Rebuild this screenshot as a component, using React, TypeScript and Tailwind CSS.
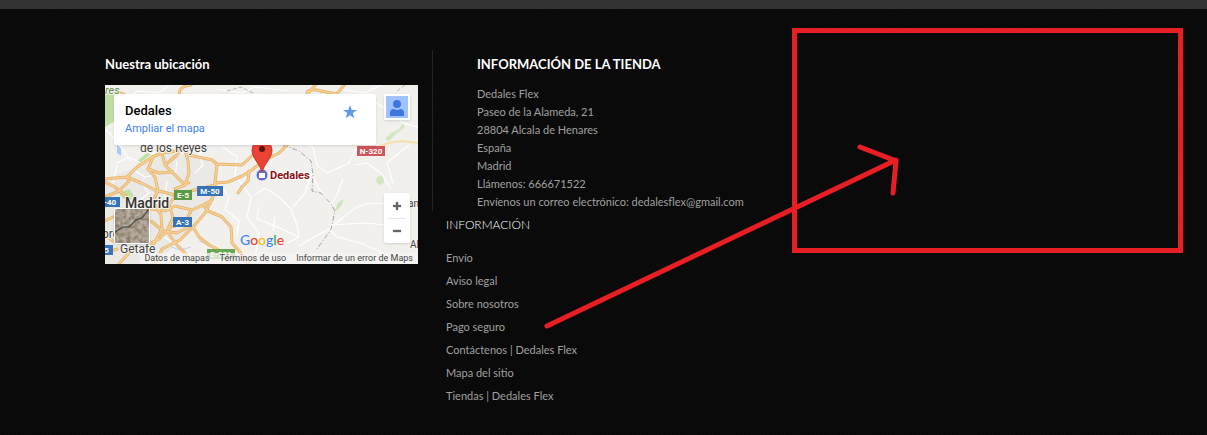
import { Minus, Plus } from "lucide-react";

const STORE_LINES = [
  "Dedales Flex",
  "Paseo de la Alameda, 21",
  "28804 Alcala de Henares",
  "España",
  "Madrid",
  "Llámenos: 666671522",
  "Envíenos un correo electrónico: dedalesflex@gmail.com",
];

const INFO_LINKS = [
  "Envío",
  "Aviso legal",
  "Sobre nosotros",
  "Pago seguro",
  "Contáctenos | Dedales Flex",
  "Mapa del sitio",
  "Tiendas | Dedales Flex",
];

const MOTORWAYS = [
  "M4 6 Q10 4 15 8 Q24 10 25 18",
  "M76 14 Q70 2 86 0",
  "M200 12 L212 -2 M202 7 Q206 3 216 6 L232 9 M231 10 L241 -2",
  "M0 94 L10 93 L22 92 L32 82 L47 72 L57 68 L80 65 L84 70 L107 75 L112 79 L137 80 L148 70 L160 60",
  "M112 79 L110 98 L108 112 L100 128 L88 142 L75 155 L57 164 L50 179",
  "M80 65 L83 76 L84 88 L80 100 L70 104",
  "M57 68 L60 80 L67 87 L77 97 L84 98 M60 80 L72 70 L78 60",
  "M48 72 L43 84 L50 92 L53 106 L48 116 L56 130 L57 144 L47 162",
  "M43 84 L54 88 L67 87",
  "M0 112 L14 106 L24 96 L22 92 M0 97 L10 102 L24 114",
  "M22 92 L36 98 L50 105 L70 110 L86 106 L110 100",
  "M107 115 L98 120 L87 125 L70 121 L60 126 L46 124",
  "M98 120 L103 126 L117 132 L126 142 L127 158 L134 166 L144 179",
  "M70 111 L64 120 L68 132 L62 146 L70 158 L82 170",
  "M86 126 L80 138 L66 142 L54 154 L46 158",
  "M46 136 L58 146 L72 148 L84 142",
  "M88 142 L94 152 L104 160 L120 168",
  "M0 150 L8 156 M14 179 L24 168 M0 136 L8 132 M0 168 L12 164",
  "M110 98 L123 97 L137 91 L147 85 L158 76 L174 68 L188 54",
  "M144 86 L143 96 L137 102 L133 108",
];

const STREETS = [
  "M12 78 L24 72 L36 78 L54 64 M90 88 L98 80 L94 70 L102 60",
  "M118 62 L132 72 L130 90 L146 112 L142 132 L154 148 L150 172",
  "M115 100 L124 112 L120 124 L134 136 L132 150",
  "M150 110 L160 103 L174 112 L186 124 L192 140 L194 152 L182 158",
  "M154 122 L152 134 L168 140 L194 152 M170 132 L168 146",
  "M224 144 L236 134 L252 122 L262 119 L282 118",
  "M224 144 L232 152 L256 158 L282 170 M224 140 L262 138 L280 140",
  "M224 144 L206 154 L194 161 M208 92 L214 104 L226 120 L232 110 L238 94",
  "M194 55 L208 62 L212 80 L222 88 L244 78 L252 62",
  "M208 84 L200 108 L188 122 M250 80 L262 78 L276 88 L286 104",
  "M271 18 L284 26 L298 38 L313 42 M304 60 L294 68 L282 78 L288 98",
  "M234 4 L260 8 L276 0 M112 4 L136 8 L150 2 L184 6 M22 14 L32 6 L54 8 L64 0",
  "M0 44 L10 54 L26 76 M12 80 L8 98 M30 86 L40 92 L50 90",
  "M62 96 L60 112 M72 76 L70 92 M38 100 L44 108 L34 116",
  "M56 150 L66 156 L76 164 M44 132 L50 140",
];

type ShieldProps = { x: number; y: number; w: number; label: string; fill: string };

function RoadShield({ x, y, w, label, fill }: ShieldProps) {
  return (
    <g>
      <rect x={x} y={y} width={w} height="10" fill={fill} />
      <text x={x + w / 2} y={y + 8} textAnchor="middle" fontSize="8" fontWeight="700" fill="#fff">
        {label}
      </text>
    </g>
  );
}

function MapCanvas() {
  return (
    <svg
      viewBox="0 0 313 179"
      preserveAspectRatio="xMidYMid slice"
      className="block h-full w-full"
      fontFamily="Roboto, sans-serif"
      role="img"
      aria-label="Mapa de Madrid"
    >
      <rect width="313" height="179" fill="#f1f0ec" />
      <path d="M0 94 L32 82 L57 68 L84 70 L112 79 L108 112 L75 155 L50 179 L0 179 Z" fill="#ebe9e5" />
      <g fill="#bfdfa5">
        <path d="M0 6 L16 12 L10 36 L0 42 Z" />
        <path d="M32 76 L42 68 L47 70 L36 81 Z" />
        <path d="M14 108 L24 104 L30 112 L18 114 Z" />
        <path d="M280 54 l6 -6 l8 -4 l4 -6 l2 4 l-10 8 l-6 6z" opacity="0.6" />
        <path d="M272 92 l6 -2 l1 8 l-4 2 l-4 -3z" opacity="0.6" />
        <path d="M229 128 l4 -10 l6 -4 l-3 7z" opacity="0.7" />
      </g>
      <path d="M12 60 v8 l4 3 v-8z" fill="#a6caff" />
      <path d="M66 162 L76 165 L86 162 M94 156 L106 160" stroke="#b9d4fa" strokeWidth="1" fill="none" />
      <g fill="none" stroke="#fff" strokeWidth="1.2" strokeLinejoin="round">
        {STREETS.map((d) => (
          <path key={d} d={d} />
        ))}
      </g>
      <path d="M266 64 L284 58 L296 56 L313 58" stroke="#f6dfaa" strokeWidth="2" fill="none" />
      <path
        d="M178 60 L194 66 L206 76 L208 90 L207 106 L216 108 L226 119 L230 126 L226 144 L222 150 L212 164"
        fill="none"
        stroke="#a5a29e"
        strokeWidth="1"
        strokeDasharray="5 2 1 2"
      />
      <path
        d="M122 6 L136 2 L148 8 M292 6 L300 0"
        fill="none"
        stroke="#b7b4b0"
        strokeWidth="1"
        strokeDasharray="4 2"
      />
      <g fill="none" strokeLinejoin="round" strokeLinecap="round">
        <g stroke="#e2b068" strokeWidth="3">
          {MOTORWAYS.map((d) => (
            <path key={d} d={d} />
          ))}
        </g>
        <g stroke="#f8cf92" strokeWidth="1.6">
          {MOTORWAYS.map((d) => (
            <path key={d} d={d} />
          ))}
        </g>
      </g>

      <g fill="#444" stroke="#f6f4f0" strokeWidth="2" paintOrder="stroke">
        <text x="0" y="9" fontSize="11" fontStyle="italic" fill="#5c8a4c">res</text>
        <text x="35" y="67" fontSize="12">de los Reyes</text>
        <text x="20" y="123" fontSize="14" fontWeight="500" fill="#333">Madrid</text>
        <text x="-3" y="153" fontSize="12">orc</text>
        <text x="15" y="168" fontSize="12">Getafe</text>
        <text x="303" y="122" fontSize="10">an</text>
        <text x="305" y="163" fontSize="10">Al</text>
      </g>

      <RoadShield x={252} y={61} w={28} label="N-320" fill="#d0545c" />
      <RoadShield x={69} y={105} w={18} label="E-5" fill="#5a9a45" />
      <RoadShield x={92} y={101} w={26} label="M-50" fill="#3673b9" />
      <RoadShield x={68} y={132} w={19} label="A-3" fill="#3673b9" />
      <RoadShield x={-5} y={112} w={20} label="-40" fill="#3673b9" />
      <RoadShield x={-5} y={160} w={13} label="5" fill="#3673b9" />
      <RoadShield x={102} y={164} w={28} label="E-901" fill="#6da556" />

      <circle cx="157" cy="90" r="6" fill="#5d70cf" stroke="#e8eafc" strokeWidth="1" />
      <path d="M154 93 v-5 h2 v-2 h2 v2 h2 v5z" fill="#fff" />
      <path
        d="M157 88 C155 78 147 74 147 65 A10 10 0 0 1 167 65 C167 74 159 78 157 88 Z"
        fill="#ea4335"
        stroke="#b3261d"
        strokeWidth="0.8"
      />
      <circle cx="157" cy="64" r="3" fill="#5b1410" />
      <text
        x="165"
        y="94"
        fontSize="11"
        fontWeight="700"
        fill="#8b1014"
        stroke="#fff"
        strokeWidth="2"
        paintOrder="stroke"
      >
        Dedales
      </text>
    </svg>
  );
}

function SatelliteThumb() {
  return (
    <svg viewBox="0 0 34 34" className="block h-full w-full" aria-hidden="true">
      <filter id="terrain">
        <feTurbulence type="fractalNoise" baseFrequency="0.25" numOctaves="3" seed="4" />
        <feColorMatrix values="0.5 0 0 0 0.13  0.45 0 0 0 0.1  0.4 0 0 0 0.06  0 0 0 0 1" />
      </filter>
      <rect width="34" height="34" filter="url(#terrain)" />
      <path d="M0 23 L8 18 L14 18 L21 11 L27 9 L34 0" fill="none" stroke="#343b31" strokeWidth="1.5" opacity="0.7" />
    </svg>
  );
}

function LocationMap() {
  return (
    <div className="relative mt-[11px] h-[179px] overflow-hidden bg-[#f1f0ec] font-[Roboto,sans-serif]">
      <MapCanvas />

      <div className="absolute top-[9px] left-[9px] flex h-[51px] w-[262px] justify-between rounded-xs bg-white px-[11px] pt-2 shadow">
        <div>
          <p className="text-[13px] leading-[18px] font-medium text-black">Dedales</p>
          <a href="#mapa" className="block text-[11px] leading-[18px] text-[#427fed]">
            Ampliar el mapa
          </a>
        </div>
        <button type="button" aria-label="Guardar" className="mr-2 flex h-5 items-center text-[#5f9ae8]">
          <svg viewBox="0 0 20 20" width="14" height="14" aria-hidden="true">
            <path d="M10 0 L12.4 7 H20 L14 11.6 L16.2 19 L10 14.6 L3.8 19 L6 11.6 L0 7 H7.6 Z" fill="currentColor" />
          </svg>
        </button>
      </div>

      <button
        type="button"
        aria-label="Cuenta"
        className="absolute top-[9px] right-2 size-[26px] border-2 border-white bg-[#a0c3ff] text-[#3f76e0] shadow"
      >
        <svg viewBox="0 0 22 22" className="block size-full" fill="currentColor" aria-hidden="true">
          <circle cx="11" cy="8" r="4" />
          <path d="M4 20 V17 Q4 13 8 13 Q11 15 14 13 Q18 13 18 17 V20 Z" />
        </svg>
      </button>

      <div className="absolute top-[108px] right-2 flex w-[26px] flex-col items-center rounded-xs bg-white text-[#666] shadow">
        <button type="button" aria-label="Acercar" className="flex h-[25px] items-center">
          <Plus size={14} strokeWidth={4} strokeLinecap="butt" />
        </button>
        <span className="h-px w-[18px] bg-gray-200" />
        <button type="button" aria-label="Alejar" className="flex h-6 items-center">
          <Minus size={14} strokeWidth={4} strokeLinecap="butt" />
        </button>
      </div>

      <button
        type="button"
        aria-label="Vista satélite"
        className="absolute top-[123px] left-[9px] size-9 overflow-hidden rounded-xs border border-white shadow"
      >
        <SatelliteThumb />
      </button>

      <span className="absolute top-[146px] left-[135px] font-[Lato,sans-serif] text-[14px] leading-[18px] font-medium">
        <span className="text-[#4285f4]">G</span>
        <span className="text-[#ea4335]">o</span>
        <span className="text-[#fbbc05]">o</span>
        <span className="text-[#4285f4]">g</span>
        <span className="text-[#34a853]">l</span>
        <span className="text-[#ea4335]">e</span>
      </span>

      <div className="absolute right-0 bottom-0 flex gap-2.5 bg-[#f5f5f5]/75 pr-[5px] pl-1 text-[9px] leading-[11px] whitespace-nowrap text-[#444]">
        <a href="#datos">Datos de mapas</a>
        <a href="#terminos">Términos de uso</a>
        <a href="#error">Informar de un error de Maps</a>
      </div>
    </div>
  );
}

function Annotation() {
  return (
    <svg
      className="pointer-events-none absolute inset-0 h-full w-full"
      fill="none"
      stroke="#e81e25"
      strokeWidth="5"
      aria-hidden="true"
    >
      <rect x="794.5" y="30.5" width="386" height="220" />
      <path d="M547 326 L896 160 M860 147 L896 161 L893 193" strokeLinecap="round" />
    </svg>
  );
}

export default function App() {
  return (
    <div className="relative flex min-h-screen flex-col overflow-hidden bg-[#0a0a0a] font-[Lato,sans-serif] text-[11px] text-[#a0a0a0]">
      <div className="h-[9px] bg-[#333]" />
      <footer className="grow bg-[repeating-linear-gradient(45deg,#0c0c0c_0px,#0c0c0c_1px,#080808_2px,#080808_3px)] px-6 pt-[41px] pb-6">
        <div className="mx-auto flex max-w-[997px] items-start">
          <section className="w-[313px] shrink-0 pt-1">
            <h4 className="text-[13px] leading-5 font-bold text-white">Nuestra ubicación</h4>
            <LocationMap />
          </section>

          <div className="ml-3.5 grow">
            <section className="border-l border-[#222] pt-1 pl-11">
              <h4 className="text-[13px] leading-5 font-bold text-white">INFORMACIÓN DE LA TIENDA</h4>
              <ul className="mt-[11px] leading-[18px]">
                {STORE_LINES.map((line) => (
                  <li key={line}>{line}</li>
                ))}
              </ul>
            </section>

            <section className="pl-3.5">
              <h4 className="mt-1 text-[12px] leading-5 font-light text-white">INFORMACIÓN</h4>
              <ul className="mt-[11px] leading-[23px]">
                {INFO_LINKS.map((label) => (
                  <li key={label}>
                    <a href="#info" className="hover:text-white">
                      {label}
                    </a>
                  </li>
                ))}
              </ul>
            </section>
          </div>
        </div>
      </footer>
      <Annotation />
    </div>
  );
}
